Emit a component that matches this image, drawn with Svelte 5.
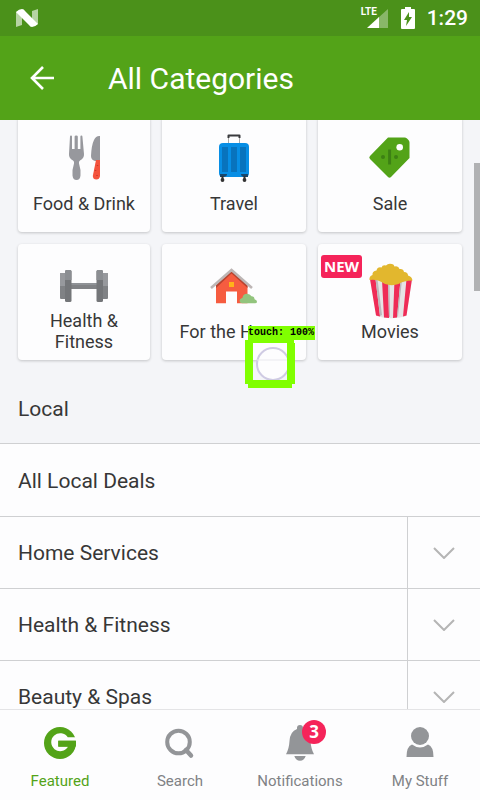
<script>
  const sections = ['Home Services', 'Health & Fitness', 'Beauty & Spas'];
</script>

<div class="screen">
  <div class="status">
    <svg class="logo" width="22" height="18" viewBox="0 0 22 18" aria-hidden="true">
      <path d="M0 3 6 1v15l-6 2zM16 2l6-2v15l-6 2z" fill="#fff" opacity=".6" />
      <path d="M0 3Q3 0 6 0q2 0 3 2l13 13q-3 3-6 3-2 0-3-2z" fill="#fff" />
    </svg>
    <div class="signal">
      <span>LTE</span>
      <svg width="22" height="19" viewBox="0 0 22 19" aria-hidden="true">
        <path d="M22 0v19H12V9z" fill="#fff" opacity=".35" />
        <path d="M13 8v11H1z" fill="#fff" />
      </svg>
    </div>
    <svg width="14" height="22" viewBox="0 0 14 22" aria-hidden="true">
      <path d="M4 0h6v2h3q1 0 1 1v18q0 1-1 1H1q-1 0-1-1V3q0-1 1-1h3z" fill="#fff" />
      <path d="M8 5 3 13h3l-1 6 6-9H8z" fill="#4b911a" />
    </svg>
    <time>1:29</time>
  </div>

  <header>
    <button class="back" aria-label="Back">
      <svg width="24" height="24" viewBox="0 0 24 24">
        <path d="M24 12H2M13 1 2 12l11 11" fill="none" stroke="#fff" stroke-width="2.6" />
      </svg>
    </button>
    <h1>All Categories</h1>
  </header>

  <main>
    <div class="grid">
      <a class="card" href="#food">
        <svg viewBox="0 0 48 48" aria-hidden="true">
          <path d="M10 2.500q0-1 1-1t1 1V15h2.600V2.500q0-1 1.600-1t1.600 1V15h2.600V2.500q0-1 1-1t1 1L24 20q.3 4-4 6.500-1.500 1-1 3 2 6 1.500 12-.5 4.500-4 4.500t-4-4.500q-.5-6 1.500-12 .5-2-1-3Q8.700 24 9 20z" fill="#97989d" />
          <path d="M40 2v25h-5q-4-1-4-5 .5-11 3-16 2-4.500 6-4z" fill="#97989d" />
          <path d="M36 26h4v16q-.5 3.500-3.700 3.500T32.800 42z" fill="#f4533d" />
          <path d="M35.500 36v1M37 41v1M37.500 31v1" stroke="#c8392c" stroke-width="1.500" />
        </svg>
        <span>Food &amp; Drink</span>
      </a>
      <a class="card" href="#travel">
        <svg viewBox="0 0 48 48" aria-hidden="true">
          <path d="M18.500 9V3M29.500 9V3" stroke="#aaa" />
          <path d="M18.500 4V1.500h11V4" fill="none" stroke="#393a3d" stroke-width="2" stroke-linejoin="round" />
          <rect x="9" y="9" width="30" height="34" rx="4" fill="#078ee5" />
          <path d="M12 13h6v25h-6zM21 13h6v25h-6zM30 13h6v25h-6z" fill="#0873bd" />
          <path d="M10 40h7q0 3-4 3h-3zM31 40h7v3h-3q-4 0-4-3z" fill="#17476d" />
          <path d="M12.500 42v4M34.500 42v4" stroke="#333" stroke-width="2" />
          <circle cx="12.500" cy="46" r="1.900" fill="#333" />
          <circle cx="34.500" cy="46" r="1.900" fill="#333" />
        </svg>
        <span>Travel</span>
      </a>
      <a class="card" href="#sale">
        <svg viewBox="0 0 48 48" aria-hidden="true">
          <path d="M22 3.500h16.500q1.500 0 2.500 1l1.500 1.500q1 1 1 2.500V24L25 43q-1.500 1.500-3 0L4 25q-1.500-1.500 0-3z" fill="#53a318" />
          <circle cx="33.700" cy="13.300" r="3.300" fill="#fff" />
          <circle cx="17" cy="23" r="2" fill="#3d8014" />
          <circle cx="30" cy="23" r="2" fill="#3d8014" />
          <path d="M23.600 15.500v15" stroke="#3d8014" stroke-width="3" />
        </svg>
        <span>Sale</span>
      </a>
      <a class="card" href="#fitness">
        <svg viewBox="0 0 48 48" aria-hidden="true">
          <rect x="11" y="21" width="26" height="6" fill="#808285" />
          <path d="M11 21h26v2H11z" fill="#8f9296" />
          <rect y="11" width="7" height="26" rx="1" fill="#808285" />
          <rect x="41" y="11" width="7" height="26" rx="1" fill="#808285" />
          <path d="M0 12q0-1 1-1h5v13H0zM42 11h5q1 0 1 1v12h-6z" fill="#97999d" />
          <rect x="5" y="8" width="6.500" height="32" rx="1.500" fill="#747679" />
          <rect x="36.500" y="8" width="6.500" height="32" rx="1.500" fill="#747679" />
          <path d="M5 9.500Q5 8 6.500 8H10q1.500 0 1.500 1.500V18H5zM36.500 9.500Q36.500 8 38 8h3.500Q43 8 43 9.500V18h-6.500z" fill="#8b8e92" />
        </svg>
        <span>Health &amp; Fitness</span>
      </a>
      <a class="card" href="#home">
        <svg viewBox="0 0 48 48" aria-hidden="true">
          <path d="M6 23 21.500 9l16 14v18.300H27V29.500H16v11.800H6z" fill="#f65c40" />
          <path d="M6 23 21.500 9l16 14v3l-16-14.500L6 26z" fill="#b8432f" />
          <path d="M1 26 21.500 8 42 26" fill="none" stroke="#bdb6b5" stroke-width="2.600" />
          <rect x="19" y="20" width="5" height="5" fill="#ffb21a" />
          <path d="M32 41.300q-2.500-.3-2.500-2.500t3-3q.5-4 4.500-4 3 0 4.500 2.500 3 0 3 3 2.500.5 2.500 2.500 0 1.500-2 1.500z" fill="#92c47d" />
        </svg>
        <span>For the Home</span>
      </a>
      <a class="card" href="#movies">
        <b class="new">NEW</b>
        <svg viewBox="0 0 48 48" aria-hidden="true">
          <path d="M4 17h42l-5.500 37Q25 58.500 10.500 54z" fill="#e6e4e6" />
          <path d="M4 17h5.500l4.500 37.500-4-1zM16 18h6l1 38-5-.5zM28.500 18h6l-3.500 37.500-4 .5zM40.500 17H46l-5.500 36.500-3.500 1z" fill="#ef2c57" />
          <path d="M9.500 17h2l4.500 36-2 1zM22 18h1.500l.5 37h-1zM34.500 18H36l-4 36-1 1z" fill="#bdb9bd" />
          <path d="M3.500 18q-.5-4 3-5-.5-4 4-4.500 1-4 5-3 1-3 4.500-2 2-2.500 6-1.500 2 0 2.500 2.500 4-1 5 2.500 4-.5 4.500 3 4 0 4 3.500 4 1 4.500 5-9 0-14 3.500-4 1.500-9 1-4 0-8-3-5-3-12-2z" fill="#e2b72e" />
        </svg>
        <span>Movies</span>
      </a>
    </div>

    <h2>Local</h2>
    <a class="row all" href="#local">All Local Deals</a>
    {#each sections as name}
      <div class="row split">
        <a href="#local">{name}</a>
        <button aria-label={`Expand ${name}`}>
          <svg width="22" height="12" viewBox="0 0 22 12">
            <path d="m1 1 10 10L21 1" fill="none" stroke="#b5b5b5" stroke-width="2" />
          </svg>
        </button>
      </div>
    {/each}
    <div class="thumb"></div>
  </main>

  <nav>
    <a class="active" href="#featured">
      <svg viewBox="0 0 36 36" aria-hidden="true">
        <circle cx="18" cy="18" r="16" fill="#53a318" />
        <path d="M34 12.300h-8.200A9 9 0 1 0 26 21.700h-9.700v-6H34z" fill="#fdfdfe" />
        <path d="M16.300 15.700h17.600v5.800h-17.600z" fill="#53a318" />
      </svg>
      <span>Featured</span>
    </a>
    <a href="#search">
      <svg viewBox="0 0 36 36" aria-hidden="true">
        <circle cx="16.500" cy="17" r="11.300" fill="none" stroke="#939598" stroke-width="4" />
        <path d="m24 25 5 5.500" stroke="#939598" stroke-width="4.500" stroke-linecap="round" />
      </svg>
      <span>Search</span>
    </a>
    <a href="#notifications">
      <svg viewBox="0 0 36 36" aria-hidden="true">
        <path d="M18 0q3 0 3 3v1q7 2.500 7.500 12 .5 8 3.500 13.300H4Q7 24 7.500 16 8 6.500 15 4V3q0-3 3-3zM12.300 31h11.400q-1.500 4.700-5.700 4.700T12.300 31z" fill="#939598" />
      </svg>
      <b class="count">3</b>
      <span>Notifications</span>
    </a>
    <a href="#stuff">
      <svg viewBox="0 0 36 36" aria-hidden="true">
        <circle cx="18" cy="11" r="9" fill="#939598" />
        <path d="M10 19.500q8 6 16 0 5.500 2 5.500 12.500h-27Q4.500 21.500 10 19.500z" fill="#939598" />
      </svg>
      <span>My Stuff</span>
    </a>
  </nav>

  <div class="touch">
    <span>touch: 100%</span>
    <svg width="50" height="50" viewBox="0 0 50 50" aria-hidden="true">
      <circle cx="28" cy="26" r="16" fill="#fdfdfe" stroke="#cfcbe3" stroke-width="2" />
      <path d="M12 22h30" stroke="#e9e9ee" />
      <path d="M0 2h49v3h1v41h-3v4H3v-4H0zM8 5v37h34V5z" fill="#80ff00" fill-rule="evenodd" />
    </svg>
  </div>
</div>

<style>
  :global(body) {
    margin: 0;
  }
  .screen {
    position: relative;
    display: flex;
    flex-direction: column;
    height: 100vh;
    overflow: hidden;
    background: #fdfdfe;
    color: #373737;
    font-family: Roboto, 'Liberation Sans', sans-serif;
  }
  a {
    color: inherit;
    text-decoration: none;
  }
  button {
    padding: 0;
    border: 0;
    background: none;
    display: flex;
    align-items: center;
    justify-content: center;
  }
  .status {
    flex: none;
    display: flex;
    align-items: center;
    box-sizing: border-box;
    height: 36px;
    padding: 0 12px 0 16px;
    background: #4b911a;
    color: #fff;
  }
  .logo {
    margin-right: auto;
  }
  .signal {
    position: relative;
    display: flex;
    margin-right: 13px;
  }
  .signal span {
    position: absolute;
    left: -5px;
    top: -3px;
    font-size: 10px;
    line-height: 12px;
    font-weight: 700;
  }
  time {
    margin-left: 12px;
    font-size: 21px;
    line-height: 36px;
    font-weight: 500;
  }
  header {
    flex: none;
    display: flex;
    align-items: center;
    height: 84px;
    background: #53a318;
    color: #fff;
  }
  .back {
    width: 84px;
    height: 84px;
    margin-right: 24px;
  }
  h1 {
    margin: 0;
    font-size: 30px;
    font-weight: 400;
  }
  main {
    position: relative;
    flex: 1;
    min-height: 0;
    overflow: hidden;
    background: #f4f5f8;
  }
  .grid {
    display: grid;
    grid-template-columns: 11fr 12fr 12fr;
    gap: 12px;
    margin-top: -4px;
    padding: 0 18px 12px;
  }
  .card {
    position: relative;
    display: flex;
    flex-direction: column;
    align-items: center;
    box-sizing: border-box;
    min-height: 116px;
    padding: 18px 12px 0;
    border-radius: 4px;
    background: #fdfdfe;
    box-shadow: 0 1px 3px rgba(0, 0, 0, 0.2);
    font-size: 18px;
    line-height: 21px;
    text-align: center;
  }
  .card svg {
    width: 48px;
    height: 48px;
    overflow: visible;
  }
  .card span {
    display: flex;
    align-items: center;
    min-height: 42px;
  }
  .new {
    position: absolute;
    left: 3px;
    top: 11px;
    padding: 0 3px;
    border-radius: 3px;
    background: #f5245a;
    color: #fff;
    font: 700 15px/23px 'Open Sans', sans-serif;
  }
  h2 {
    box-sizing: border-box;
    height: 72px;
    margin: 0;
    padding: 0 18px;
    border-bottom: 1px solid #cfd0d2;
    font-size: 21px;
    line-height: 74px;
    font-weight: 400;
  }
  .row {
    display: flex;
    box-sizing: border-box;
    height: 72px;
    background: #fdfdfe;
    font-size: 21px;
    line-height: 72px;
  }
  .all {
    padding: 0 18px;
    line-height: 74px;
  }
  .split {
    border-top: 1px solid #cfd0d2;
  }
  .split a {
    flex: 1;
    padding: 0 18px;
  }
  .split button {
    width: 73px;
    border-left: 1px solid #cfd0d2;
  }
  .thumb {
    position: absolute;
    right: 0;
    top: 43px;
    width: 6px;
    height: 128px;
    background: #b0b1b3;
  }
  nav {
    flex: none;
    display: flex;
    border-top: 1px solid #e4e4e6;
    background: #fdfdfe;
    color: #808285;
  }
  nav a {
    position: relative;
    flex: 1;
    display: flex;
    flex-direction: column;
    align-items: center;
    gap: 10px;
    padding: 15px 0 9px;
    font-size: 15px;
    line-height: 20px;
  }
  nav svg {
    width: 36px;
    height: 36px;
  }
  nav .active {
    color: #53a318;
  }
  .count {
    position: absolute;
    left: calc(50% + 2px);
    top: 10px;
    width: 24px;
    border-radius: 12px;
    background: #f5245a;
    color: #fff;
    font: 700 17px/24px 'Open Sans', sans-serif;
    text-align: center;
  }
  .touch {
    position: absolute;
    left: 245px;
    top: 326px;
    pointer-events: none;
  }
  .touch span {
    position: absolute;
    left: 3px;
    top: 0;
    z-index: 1;
    padding-right: 1px;
    background: #80ff00;
    color: #000;
    font: 700 10px/14px 'Liberation Mono', monospace;
    white-space: nowrap;
  }
  .touch svg {
    display: block;
    margin-top: 12px;
  }
</style>
